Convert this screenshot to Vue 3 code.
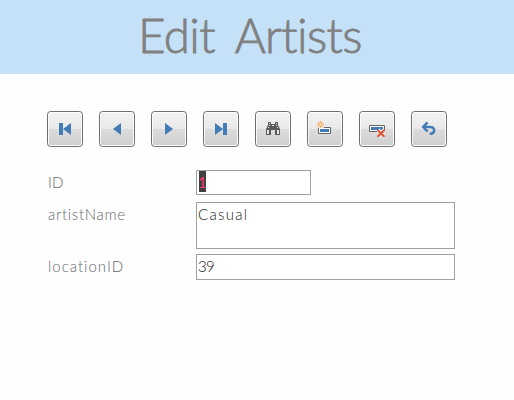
<script setup>
const buttons = ['first', 'previous', 'next', 'last', 'find', 'add', 'delete', 'undo']
</script>

<template>
  <main class="form">
    <header class="header"><h1 class="title">Edit Artists</h1></header>
    <nav class="toolbar">
      <button v-for="name in buttons" :key="name" class="tool" type="button">
        <svg class="icon" viewBox="0 0 34 34" width="34" height="34">
          <g v-if="name === 'first'" fill="#427bb8">
            <path d="M11 11h4v12h-4z" /><path d="M23 11v12l-8-6z" />
          </g>
          <path v-else-if="name === 'previous'" d="M21 11v12l-8-6z" fill="#427bb8" />
          <path v-else-if="name === 'next'" d="M13 11v12l8-6z" fill="#427bb8" />
          <g v-else-if="name === 'last'" fill="#427bb8">
            <path d="M11 11v12l8-6z" /><path d="M19 11h4v12h-4z" />
          </g>
          <g v-else-if="name === 'find'">
            <path d="M12 10h3v2h4v-2h3v3l2 4v6h-5v-5h-4v5h-5v-6l2-4z" fill="#5b5b5b" />
            <path d="M13 11h1v1h-1zM20 11h1v1h-1zM13 13h1v1h-1zM20 13h1v1h-1zM12 15h1v1h-1zM21 15h1v1h-1zM11 18h2v4h-2zM21 18h2v4h-2zM16 13h2v1h-2z" fill="#e4e4e4" />
          </g>
          <g v-else-if="name === 'add'">
            <path d="M10.500 15.500H22.500V21.500H10.500z" fill="#fff" stroke="#666" />
            <path d="M12 17h9v3h-9z" fill="#427bb8" />
            <path d="M9 10h7v6H9z" fill="#ececec" />
            <path d="M12.500 9v7M9 12.500h7M10 10l5 5M15 10l-5 5" stroke="#f1b066" stroke-width="1.100" />
            <circle cx="12.500" cy="12.500" r="1.100" fill="#fff1d8" />
          </g>
          <g v-else-if="name === 'delete'">
            <path d="M9.500 13.500h15v6h-15z" fill="#fff" stroke="#666" />
            <path d="M11 15h12v3H11z" fill="#427bb8" />
            <path d="M18 18l6.500 6.500M24.500 18L18 24.500" stroke="#eee" stroke-width="4" />
            <path d="M17.500 18l7 6.700M24.500 18l-7 6.700" stroke="#dc5535" stroke-width="2.200" />
          </g>
          <g v-else fill="none" stroke="#427bb8" stroke-width="2.500">
            <path d="M12 15h6.500c5 0 5 6.700-.8 6.700" />
            <path d="M15.500 10.300L11.200 15l4.300 4.500" />
          </g>
        </svg>
      </button>
    </nav>
    <section class="fields">
      <div class="row id-row">
        <span class="label">ID</span>
        <div class="box"><span class="selected">1</span></div>
      </div>
      <div class="row name-row">
        <span class="label name">artistName</span>
        <div class="box"><span class="value">Casual</span></div>
      </div>
      <div class="row location-row">
        <span class="label location">locationID</span>
        <div class="box"><span class="value number">39</span></div>
      </div>
    </section>
  </main>
</template>

<style>
body { margin: 0; background: #fff; }
</style>

<style scoped>
.form { height: 400px; overflow: hidden; background: #fefefe; font-family: Lato, "Liberation Sans", sans-serif; font-size: 15px; font-variant-ligatures: none; }
.header { height: 74px; background: #c4e1f7; box-sizing: border-box; padding: 6px 0 0 138px; }
.title { margin: 0; font-size: 47.500px; line-height: 58px; font-weight: 300; color: #808080; letter-spacing: -.6px; word-spacing: 9px; white-space: nowrap; -webkit-text-stroke: .8px #808080; }
.toolbar { display: flex; gap: 16px; padding: 37px 0 0 47px; }
.tool { width: 36px; height: 36px; box-sizing: border-box; padding: 0; border: 1px solid #707070; border-radius: 3.500px; background: linear-gradient(#f2f2f2 0, #e9e9e9 49%, #dcdcdc 50%, #cecece 100%); box-shadow: inset 0 0 0 1px #fafafa; }
.icon { display: block; }
.fields { display: flex; flex-direction: column; padding: 23px 0 0 47px; }
.row { display: grid; grid-template-columns: 149px 259px; }
.id-row { height: 25px; grid-template-columns: 149px 115px; margin-bottom: 7px; }
.name-row { height: 47px; margin-bottom: 5px; }
.location-row { height: 26px; }
.label { color: #686868; font-weight: 300; line-height: 20px; padding: 2px 0 0 1px; }
.name { letter-spacing: .7px; }
.location { letter-spacing: 1px; }
.box { border: 1px solid #a0a0a0; background: #fff; padding: 0 0 0 1px; }
.value { display: block; color: #222; font-weight: 300; line-height: 20px; padding-top: 1px; letter-spacing: 1.300px; }
.number { letter-spacing: -.8px; }
.selected { display: block; width: 7px; height: 21px; margin-left: 1px; background: #404040; color: #ff3b78; font-weight: 400; line-height: 23px; text-align: center; text-indent: -1px; }
</style>
